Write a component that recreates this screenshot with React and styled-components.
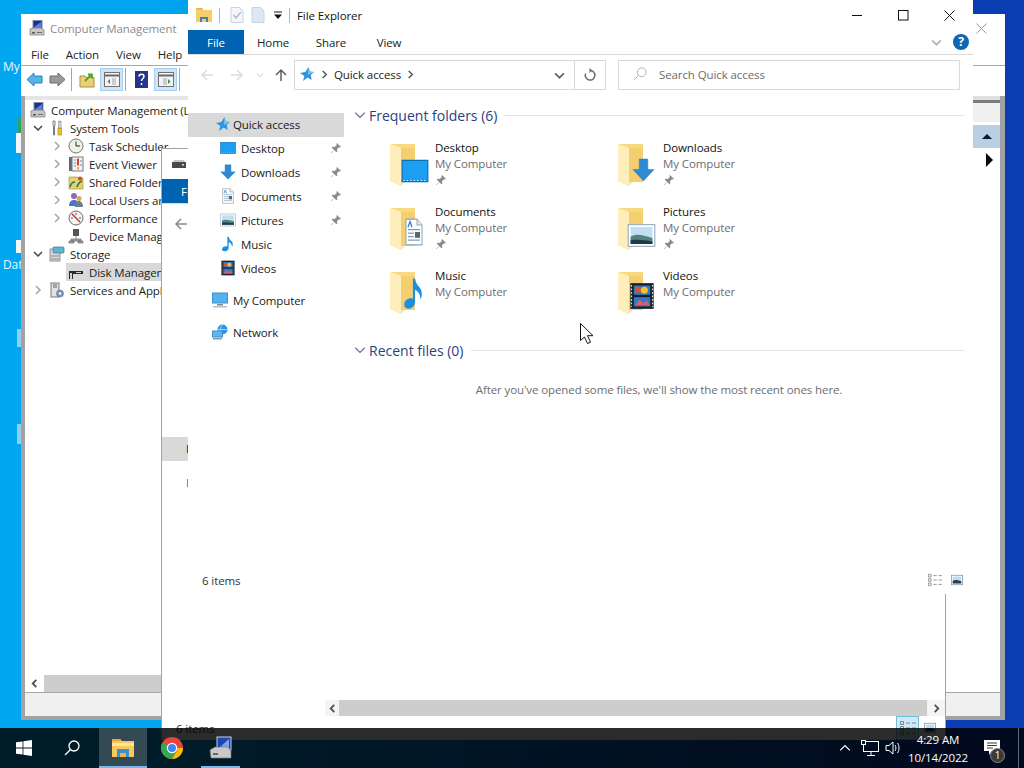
import React from "react";
import styled, { createGlobalStyle } from "styled-components";

const Global = createGlobalStyle`
  html, body { margin: 0; padding: 0; }
  body { font-family: "Open Sans", "Noto Sans", "Liberation Sans", sans-serif; font-size: 11.5px; letter-spacing: -0.1px; color: #1a1a1a; }
`;

const Desktop = styled.div`
  position: relative;
  width: 1024px;
  height: 768px;
  overflow: hidden;
  background: linear-gradient(90deg, #00a6f0 0, #00a4ef 16%, #0a3cb2 92%, #0a3cb2 100%);
`;

const DesktopIcon = styled.div`
  position: absolute;
  left: ${(p) => p.$x}px;
  top: ${(p) => p.$y}px;
  color: #e9f7ff;
  font-size: 12px;
  white-space: nowrap;
`;
const IconStub = styled.div`
  position: absolute;
  left: ${(p) => p.$x}px;
  top: ${(p) => p.$y}px;
  width: ${(p) => p.$w}px;
  height: ${(p) => p.$h}px;
  background: ${(p) => p.$c};
`;

const Window = styled.div`
  position: absolute;
  left: ${(p) => p.$x}px;
  top: ${(p) => p.$y}px;
  width: ${(p) => p.$w}px;
  height: ${(p) => p.$h}px;
  z-index: ${(p) => p.$z};
  background: #fff;
  display: flex;
  flex-direction: column;
  box-sizing: border-box;
  overflow: hidden;
`;
const BackWindow = styled(Window)`
  border: 1px solid #a3a3a3;
  border-bottom: none;
`;

/* Computer Management */
const CmTitle = styled.div`
  height: 26px;
  display: flex;
  align-items: center;
  padding: 2px 18px 0 8px;
  box-sizing: border-box;
  color: #8b8b8b;
  gap: 5px;
  flex: none;
`;
const PushRight = styled.div`
  margin-left: auto;
  display: flex;
  align-items: center;
`;
const CmMenu = styled.div`
  height: 26px;
  display: flex;
  align-items: center;
  padding: 3px 0 0 10px;
  gap: 17px;
  border-bottom: 1px solid #a8a8a8;
  box-sizing: border-box;
  flex: none;
  color: #222;
`;
const CmToolbar = styled.div`
  height: 30px;
  display: flex;
  align-items: flex-start;
  padding: 2px 0 0 2px;
  box-sizing: border-box;
  flex: none;
`;
const ToolBtn = styled.div`
  width: ${(p) => p.$w || 23}px;
  height: 23px;
  box-sizing: border-box;
  display: flex;
  align-items: center;
  justify-content: center;
  background: ${(p) => (p.$on ? "#cfe5f7" : "transparent")};
  border: 1px solid ${(p) => (p.$on ? "#a9cfee" : "transparent")};
`;
const ToolSep = styled.div`
  width: 1px;
  height: 23px;
  margin: 0 2px;
  background: #a5a5a5;
`;
const CmBody = styled.div`
  flex: 1;
  min-height: 0;
  display: flex;
  flex-direction: column;
  background: #a2a2a2;
  padding: 0 5px 4px 4px;
`;
const CmPanes = styled.div`
  flex: 1;
  min-height: 0;
  display: flex;
  border-bottom: 1px solid #a8a8a8;
`;
const TreePane = styled.div`
  width: 163px;
  flex: none;
  overflow: hidden;
  display: flex;
  flex-direction: column;
  background: #fff;
  border-top: 4px solid #e6e6e6;
  padding-top: 1px;
`;
const ResultPane = styled.div`
  flex: 1;
  background: #fff;
  border-top: 4px solid #e6e6e6;
`;
const TreeList = styled.div`
  flex: 1;
  overflow: hidden;
`;
const TreeRow = styled.div`
  height: 18px;
  display: flex;
  align-items: center;
  padding-left: ${(p) => (p.$level === 0 ? 5 : 6 + (p.$level - 1) * 19)}px;
  white-space: nowrap;
`;
const TreeArrow = styled.span`
  width: 18px;
  height: 18px;
  flex: none;
  display: flex;
  align-items: center;
  padding-left: 2px;
  box-sizing: border-box;
`;
const TreeNode = styled.span`
  display: flex;
  align-items: center;
  gap: 5px;
  height: 18px;
  padding-right: 8px;
  margin-left: -2px;
  padding-left: 2px;
  background: ${(p) => (p.$selected ? "#d9d9d9" : "transparent")};
  color: #1c1c1c;
`;
const HScroll = styled.div`
  height: 17px;
  flex: none;
  display: flex;
  align-items: center;
  background: #fff;
`;
const ScrollEnd = styled.div`
  width: ${(p) => p.$w}px;
  height: 100%;
  display: flex;
  align-items: center;
  justify-content: center;
  flex: none;
  background: ${(p) => p.$bg || "transparent"};
`;
const ScrollThumb = styled.div`
  flex: 1;
  height: 100%;
  background: #cdcdcd;
`;
const ActionPane = styled.div`
  width: 54px;
  flex: none;
  background: #fff;
  border-top: 4px solid #e0e0e0;
  display: flex;
  flex-direction: column;
`;
const ActionHead = styled.div`
  height: 19px;
  background: #f0f0f0;
  border-top: 3px solid #7d7d7d;
`;
const ActionRow = styled.div`
  height: ${(p) => p.$h}px;
  margin-top: ${(p) => p.$m}px;
  background: ${(p) => p.$bg || "transparent"};
  display: flex;
  align-items: center;
  justify-content: flex-end;
  padding-right: ${(p) => p.$pr}px;
`;
const CmStatus = styled.div`
  height: 23px;
  flex: none;
  background: #f0f0f0;
`;

/* Explorer */
const ExTitle = styled.div`
  height: 30px;
  flex: none;
  display: flex;
  align-items: center;
  padding-left: ${(p) => p.$pl || 8}px;
  color: #111;
`;
const QuatSep = styled.div`
  width: 1px;
  height: 15px;
  background: #b5b5b5;
  margin: 0 ${(p) => p.$r}px 0 ${(p) => p.$l}px;
`;
const QuatBtn = styled.div`
  width: ${(p) => p.$w}px;
  display: flex;
  justify-content: center;
  align-items: center;
`;
const WinControls = styled.div`
  margin-left: auto;
  display: flex;
  margin-right: 1px;
  align-items: center;
`;
const WinControl = styled.div`
  width: 46px;
  height: 30px;
  display: flex;
  align-items: center;
  justify-content: center;
`;
const RibbonTabs = styled.div`
  height: 25px;
  flex: none;
  display: flex;
  align-items: stretch;
  border-bottom: 1px solid #dadada;
  box-sizing: border-box;
`;
const FileTab = styled.div`
  width: 56px;
  background: #0063b1;
  color: #fff;
  display: flex;
  align-items: center;
  justify-content: center;
`;
const RibbonTab = styled.div`
  width: 58px;
  display: flex;
  align-items: center;
  justify-content: center;
  color: #222;
`;
const RibbonEnd = styled.div`
  margin-left: auto;
  display: flex;
  align-items: center;
  gap: 11px;
  padding-right: 4px;
`;
const HelpBadge = styled.span`
  width: 16px;
  height: 16px;
  border-radius: 50%;
  background: #0f67b1;
  color: #fff;
  font-size: 12px;
  font-weight: 700;
  display: flex;
  align-items: center;
  justify-content: center;
  line-height: 1;
`;
const NavRow = styled.div`
  height: 42px;
  flex: none;
  display: flex;
  align-items: flex-start;
  padding: 5px 13px 0 4px;
  box-sizing: border-box;
`;
const NavBtn = styled.div`
  width: ${(p) => p.$w}px;
  height: 29px;
  display: flex;
  align-items: center;
  justify-content: center;
`;
const AddressBar = styled.div`
  flex: none;
  width: 312px;
  height: 30px;
  box-sizing: border-box;
  border: 1px solid #d9d9d9;
  display: flex;
  align-items: center;
`;
const AddressCrumbs = styled.div`
  flex: 1;
  display: flex;
  align-items: center;
  gap: 5px;
  padding: 0 0 2px 4px;
  color: #222;
`;
const AddressBtn = styled.div`
  width: ${(p) => p.$w}px;
  height: 100%;
  display: flex;
  align-items: center;
  justify-content: center;
  border-left: ${(p) => (p.$line ? "1px solid #d9d9d9" : "none")};
`;
const SearchBox = styled.div`
  flex: 1;
  margin-left: 12px;
  height: 30px;
  box-sizing: border-box;
  border: 1px solid #d9d9d9;
  display: flex;
  align-items: center;
  padding: 0 0 2px 14px;
  gap: 12px;
  color: #6d6d6d;
`;
const ExBody = styled.div`
  flex: 1;
  min-height: 0;
  display: flex;
`;
const Sidebar = styled.div`
  width: ${(p) => p.$w}px;
  flex: none;
  padding-top: ${(p) => p.$top}px;
  box-sizing: border-box;
  overflow: hidden;
`;
const SideRow = styled.div`
  height: 24px;
  box-sizing: border-box;
  display: flex;
  align-items: center;
  gap: ${(p) => p.$iconGap || 5}px;
  padding: 0 0 2px ${(p) => p.$pl}px;
  margin-top: ${(p) => p.$gap || 0}px;
  background: ${(p) => (p.$selected ? "#d9d9d9" : "transparent")};
  color: ${(p) => p.$tint || "#1a1a1a"};
  white-space: nowrap;
`;
const SidePin = styled.span`
  margin-left: auto;
  margin-right: 2px;
  display: flex;
`;
const MainPane = styled.div`
  flex: 1;
  min-width: 0;
  padding: 8px 9px 0 10px;
  box-sizing: border-box;
`;
const GroupHead = styled.div`
  height: 20px;
  display: flex;
  align-items: center;
  color: #2b3f7f;
  font-size: 14px;
  letter-spacing: 0;
  margin-top: ${(p) => p.$m || 0}px;
`;
const GroupChevron = styled.span`
  width: 15px;
  flex: none;
  display: flex;
`;
const GroupLine = styled.div`
  flex: 1;
  height: 1px;
  background: #e4e4e4;
  margin-left: 7px;
`;
const FolderGrid = styled.div`
  display: grid;
  grid-template-columns: 228px 228px;
  grid-auto-rows: 64px;
  margin: 6px 0 0 34px;
`;
const FolderTile = styled.div`
  display: flex;
  padding-top: 9px;
  box-sizing: border-box;
`;
const FolderThumb = styled.div`
  width: 47px;
  height: 48px;
  flex: none;
`;
const FolderText = styled.div`
  display: flex;
  flex-direction: column;
`;
const FolderName = styled.div`
  height: 16px;
  line-height: 16px;
  color: #111;
`;
const FolderSub = styled.div`
  height: 16px;
  line-height: 16px;
  color: #6d6d6d;
`;
const FolderPin = styled.div`
  height: 16px;
  display: flex;
  align-items: center;
`;
const EmptyNote = styled.div`
  margin-top: 22px;
  line-height: 16px;
  text-align: center;
  color: #6d6d6d;
`;
const StatusBar = styled.div`
  height: ${(p) => p.$h}px;
  box-sizing: border-box;
  flex: none;
  display: flex;
  align-items: center;
  padding: 0 ${(p) => p.$pr}px ${(p) => p.$pb || 0}px 14px;
  color: #333;
`;
const ViewBtns = styled.div`
  margin-left: auto;
  display: flex;
  align-items: center;
  gap: ${(p) => p.$gap}px;
`;
const ViewBtn = styled.div`
  height: ${(p) => p.$h || 16}px;
  width: ${(p) => p.$w}px;
  display: flex;
  align-items: center;
  justify-content: center;
  box-sizing: border-box;
  background: ${(p) => (p.$on ? "#cfeaf6" : "transparent")};
  border: 1px solid ${(p) => (p.$on ? "#72bcd8" : "transparent")};
`;
const BackScroll = styled.div`
  height: 16px;
  flex: none;
  margin-left: 163px;
  display: flex;
`;
const BackSpacer = styled.div`
  flex: 1;
  min-height: 0;
  display: flex;
`;
const MousePointer = styled.svg`
  position: absolute;
  left: 580px;
  top: 323px;
  z-index: 5;
`;

/* Taskbar */
const Taskbar = styled.div`
  position: absolute;
  left: 0;
  right: 0;
  bottom: 0;
  height: 40px;
  z-index: 9;
  background: rgba(0, 0, 0, 0.83);
  display: flex;
  color: #fff;
`;
const TaskBtn = styled.div`
  position: relative;
  width: ${(p) => p.$w}px;
  margin-left: ${(p) => p.$m || 0}px;
  display: flex;
  align-items: center;
  justify-content: center;
  background: ${(p) => (p.$active ? "rgba(255,255,255,0.2)" : "transparent")};
  ${(p) =>
    p.$bar !== undefined
      ? `&::after { content: ""; position: absolute; bottom: 0; height: 2px; background: #76b9ed; left: ${p.$bar}px; right: ${p.$bar}px; }`
      : ""}
`;
const Tray = styled.div`
  margin-left: auto;
  display: flex;
  align-items: stretch;
`;
const TrayBtn = styled.div`
  width: ${(p) => p.$w}px;
  display: flex;
  align-items: center;
  justify-content: center;
`;
const Clock = styled.div`
  width: 70px;
  display: flex;
  flex-direction: column;
  align-items: center;
  justify-content: center;
  line-height: 18px;
  padding-top: 2px;
  box-sizing: border-box;
`;
const NotifyWrap = styled.div`
  position: relative;
  width: 38px;
  display: flex;
  align-items: center;
  justify-content: center;
`;
const NotifyBadge = styled.span`
  position: absolute;
  left: 17px;
  top: 20px;
  width: 15px;
  height: 15px;
  border-radius: 50%;
  background: #3a3a3a;
  border: 1px solid #8a8a8a;
  box-sizing: border-box;
  font-size: 10px;
  line-height: 13px;
  text-align: center;
  color: #fff;
`;
const ShowDesktop = styled.div`
  width: 5px;
  margin-left: 7px;
  border-left: 1px solid #5a6670;
`;

/* ---- drawings ---- */
const Chevron = ({ dir = "right", c = "#8f8f8f", s = 10, w = 1.6 }) => {
  const d = {
    right: "M3 1l4 4-4 4",
    left: "M7 1L3 5l4 4",
    down: "M1 3l4 4 4-4",
    up: "M1 7l4-4 4 4",
  }[dir];
  return (
    <svg width={s} height={s} viewBox="0 0 10 10">
      <path d={d} fill="none" stroke={c} strokeWidth={w} />
    </svg>
  );
};
const ScrollArrow = ({ dir }) => <Chevron dir={dir} c="#505050" w={2} s={9} />;
const Tri = ({ dir }) => (
  <svg width="10" height="14" viewBox="0 0 10 14">
    {dir === "up" ? <path d="M0 9l5-5 5 5z" fill="#0c1a2a" /> : <path d="M2 0l7 7-7 7z" fill="#0a0a0a" />}
  </svg>
);
const Pin = ({ s = 12, c = "#8a8a8a" }) => (
  <svg width={s} height={s} viewBox="0 0 12 12">
    <path d="M7 1l4 4-1 .6-1-.4-2 2 .3 2.3-.8.8L4 8 1.5 11 1 10.5 4 8 1.7 5.6l.8-.8 2.3.3 2-2-.4-1z" fill={c} />
  </svg>
);
const GDesktop = () => (
  <>
    <rect x="1" y="3.5" width="22" height="17" fill="#1c9ef2" stroke="#0b6fb5" />
    <path d="M2 19.6h20" stroke="#fff" strokeWidth=".8" strokeDasharray="1 2" />
  </>
);
const GDownloads = () => <path d="M7.5 1h9v10.5H23L12 23 1 11.5h6.5z" fill="#2f8ad6" stroke="#2a7dc4" strokeWidth=".5" />;
const GDocuments = () => (
  <>
    <path d="M4 1h11l5 5v17H4z" fill="#fff" stroke="#8fa6b8" />
    <path d="M15 1v5h5" fill="#e6eef4" stroke="#8fa6b8" />
    <path d="M6 8l2-5 2 5" fill="none" stroke="#2a7dd0" strokeWidth="1.2" />
    <path d="M6 10h12M6 13h6M6 16h6M6 19h12" stroke="#7ea0bc" />
    <rect x="13" y="12" width="5" height="5" fill="#4d6a78" />
  </>
);
const GPictures = () => (
  <>
    <rect x="1" y="3" width="22" height="18" fill="#fff" stroke="#9fb2c0" />
    <rect x="3" y="5" width="18" height="14" fill="#bfe0f2" />
    <path d="M3 13c5-3 10-1 18 1v5H3z" fill="#55807f" />
    <path d="M3 16c6-1 12 0 18 1v2H3z" fill="#1d3c48" />
  </>
);
const GMusic = () => (
  <path d="M11 1h2c.5 3 2 4.500 4 6.500 2.500 2.500 3 5.500 1 9-.2-3-1-5.500-5-7V18c0 3-3 5-6 5-2.500 0-4-1.300-4-3 0-2.500 3-4.500 6-4.500.8 0 1.400.1 2 .4z" fill="#1e8fe0" />
);
const GVideos = () => (
  <>
    <rect x="2" y="1" width="20" height="22" fill="#15202c" />
    <rect x="5" y="3" width="14" height="8" fill="#3178c6" />
    <rect x="5" y="13" width="14" height="8" fill="#3178c6" />
    <rect x="6" y="4" width="5" height="5" fill="#d8522f" />
    <circle cx="14" cy="7" r="3" fill="#f0c431" />
    <path d="M6 20l4-5 3 3 3-2 3 4z" fill="#e05a6a" />
    <path d="M3 2.500v19M21 2.500v19" stroke="#d8d8d8" strokeDasharray="1.500 1.500" />
  </>
);
const glyphs = { desktop: GDesktop, downloads: GDownloads, documents: GDocuments, pictures: GPictures, music: GMusic, videos: GVideos };
const SmallGlyph = ({ name }) => {
  const G = glyphs[name];
  return (
    <svg width="16" height="16" viewBox="0 0 24 24">
      <G />
    </svg>
  );
};
const overlayPos = {
  desktop: [13, 16, 28, 30],
  downloads: [16, 18, 23, 24],
  documents: [14, 14, 24, 28],
  pictures: [11, 17, 29, 29],
  music: [13, 9, 26, 33],
  videos: [12, 14, 28, 28],
};
const BigFolder = ({ name }) => {
  const G = glyphs[name];
  const [x, y, w, h] = overlayPos[name];
  return (
    <svg width="47" height="48" viewBox="0 0 47 48">
      <path d="M2 4h25v38H13v4L2 41z" fill="#fad880" />
      <path d="M13 8h14v34H13z" fill="#f4cf6f" />
      <path d="M2 4l11 4v38L2 41z" fill="#fdeebc" />
      <path d="M13 46l4-4h-4z" fill="#efe6c6" />
      <svg x={x} y={y} width={w} height={h} viewBox="0 0 24 24" preserveAspectRatio="none">
        <G />
      </svg>
    </svg>
  );
};
const Star = () => (
  <svg width="16" height="16" viewBox="0 0 16 16">
    <path d="M9.500 1l1.300 4.400L15 6l-3.200 3 .9 5-4-2.400L4 15l1.300-5L1 7l5.300-1z" fill="#2f95dc" />
    <path d="M9.500 1l1.300 4.400L15 6l-6 3z" fill="#7cc4ee" />
  </svg>
);
const Monitor = () => (
  <svg width="16" height="16" viewBox="0 0 16 16">
    <rect x="0.500" y="1" width="15" height="10" fill="#55b2ee" stroke="#3f8fc8" />
    <rect x="5" y="12" width="6" height="1.500" fill="#7d8c96" />
    <rect x="1" y="14" width="14" height="1.500" fill="#b5c0c8" />
  </svg>
);
const NetworkIcon = () => (
  <svg width="16" height="16" viewBox="0 0 16 16">
    <circle cx="10.500" cy="5.500" r="5" fill="#2f95dc" />
    <path d="M6 5.500h9M10.500 1c-3 3-3 6 0 9" stroke="#bfe4f8" fill="none" strokeWidth=".8" />
    <rect x="0.500" y="7" width="10" height="6" fill="#5db6ee" stroke="#3f8fc8" />
    <rect x="1" y="14" width="9" height="1.500" fill="#8b9aa5" />
  </svg>
);
const Drive = ({ c = "#4a4a4a" }) => (
  <svg width="16" height="16" viewBox="0 0 16 16">
    <path d="M2 6l1-2h10l1 2z" fill="#c8c8c8" />
    <rect x="1" y="6" width="14" height="6" fill={c} />
    <rect x="11" y="8" width="2" height="1.500" fill="#ddd" />
  </svg>
);
const CmIcon = ({ s = 16 }) => (
  <svg width={s} height={s} viewBox="0 0 16 16">
    <rect x="4" y="0.500" width="9" height="8" fill="#1c2f86" stroke="#7f8eb0" />
    <path d="M5 7l7-5v6H5z" fill="#5b7fd6" />
    <path d="M1 9l3-1h9l2 2v5H1z" fill="#c7c7c7" stroke="#787878" strokeWidth=".7" />
    <rect x="3" y="12" width="3" height="1.500" fill="#555" />
    <rect x="8" y="12" width="5" height="1" fill="#6f6f6f" />
  </svg>
);
const Tools = () => (
  <svg width="16" height="16" viewBox="0 0 16 16">
    <path d="M4 1h2v4l-.500 1v9h-1V6L4 5z" fill="none" stroke="#6d6d6d" strokeWidth=".9" />
    <rect x="9" y="8" width="3.500" height="7" fill="#f2c230" stroke="#a27c10" strokeWidth=".6" />
    <path d="M9.500 8V1h1v1h1V1h.6v7z" fill="#d9d9d9" stroke="#777" strokeWidth=".5" />
  </svg>
);
const Clock16 = () => (
  <svg width="16" height="16" viewBox="0 0 16 16">
    <circle cx="8" cy="8" r="7" fill="#eef1e6" stroke="#6e7a70" />
    <path d="M8 3.500V8h4" fill="none" stroke="#2b2b2b" />
  </svg>
);
const EventIcon = () => (
  <svg width="16" height="16" viewBox="0 0 16 16">
    <rect x="1" y="1" width="4" height="14" fill="#5a6a7a" />
    <rect x="4" y="1" width="11" height="14" fill="#f2f2f2" stroke="#7a7a7a" />
    <rect x="9" y="2.500" width="2" height="7" fill="#d83a3a" />
    <rect x="9" y="11" width="2" height="2.500" fill="#e0b020" />
    <path d="M6 4h2M6 7h2M6 10h2M12 5h2M12 9h2" stroke="#6b8fb0" />
  </svg>
);
const SharedIcon = () => (
  <svg width="16" height="16" viewBox="0 0 16 16">
    <path d="M1 3h9l1 1h4v11H1z" fill="#e8cf70" stroke="#a08a2a" strokeWidth=".6" />
    <path d="M2 13c1-4 3-5 5-5M9 13c1-3 2-5 5-6" stroke="#2a7a4a" fill="none" strokeWidth="1.500" />
    <circle cx="12" cy="4.500" r="2" fill="#c74a2a" />
  </svg>
);
const UsersIcon = () => (
  <svg width="16" height="16" viewBox="0 0 16 16">
    <circle cx="6" cy="4" r="3" fill="#8f6ab8" />
    <path d="M1 14c0-5 3-6 5-6s5 1 5 6z" fill="#4a74c4" />
    <circle cx="11" cy="6.500" r="2.500" fill="#d8a860" />
    <path d="M7 15c0-4 2-6 4-6s4 2 4 6z" fill="#6f7e8c" />
  </svg>
);
const PerfIcon = () => (
  <svg width="16" height="16" viewBox="0 0 16 16">
    <circle cx="8" cy="8" r="7" fill="#f4f4f4" stroke="#6c6c6c" />
    <path d="M4 4l8 8" stroke="#c43030" strokeWidth="1.500" />
    <path d="M3 8h2M11 8h2M8 3v2" stroke="#555" />
  </svg>
);
const DeviceIcon = () => (
  <svg width="16" height="16" viewBox="0 0 16 16">
    <rect x="5" y="1" width="6" height="7" fill="#555" />
    <path d="M8 8v3M3 11h10v2H3zM1 13h5v2H1zM10 13h5v2h-5z" stroke="#666" fill="#aaa" strokeWidth=".7" />
  </svg>
);
const StorageIcon = () => (
  <svg width="16" height="16" viewBox="0 0 16 16">
    <rect x="1" y="3" width="10" height="12" fill="#d9d9d9" stroke="#7c7c7c" strokeWidth=".8" />
    <rect x="4" y="1" width="11" height="6" rx="1" fill="#5fb4d4" stroke="#4c7d92" strokeWidth=".8" />
    <path d="M2 10h8M2 13h8" stroke="#8b8b8b" />
  </svg>
);
const DiskIcon = () => (
  <svg width="16" height="16" viewBox="0 0 16 16">
    <path d="M1 7h14v3H5v5H1z" fill="#2a2a2a" />
    <path d="M2 15V9h2v6zM8 8h5v1H8z" fill="#d0d0d0" />
  </svg>
);
const ServicesIcon = () => (
  <svg width="16" height="16" viewBox="0 0 16 16">
    <rect x="2" y="1" width="8" height="14" fill="#e2e2e2" stroke="#7a7a7a" />
    <path d="M4 3h4M4 5h4" stroke="#666" />
    <circle cx="11" cy="11.500" r="3.500" fill="#7a9cb4" stroke="#557" strokeWidth=".5" />
    <circle cx="11" cy="11.500" r="1.200" fill="#fff" />
  </svg>
);
const QuatFolder = () => (
  <svg width="16" height="16" viewBox="0 0 16 16">
    <path d="M0 1h6l1.500 2H16v12H0z" fill="#f4cf6c" />
    <path d="M0 1h6l1 1.500H0z" fill="#e7b44a" />
    <path d="M4 15v-5h8v5h-2v-3H6v3z" fill="#4a7ea8" />
  </svg>
);
const QuatDoc = ({ check }) => (
  <svg width="14" height="16" viewBox="0 0 14 16">
    <path d="M1 0.500h8.500L13 4v11.500H1z" fill={check ? "#f3f6fa" : "#dfe8f2"} stroke="#c8d2de" />
    {check && <path d="M3.500 8l2.500 3 5-6" fill="none" stroke="#a8b4c2" strokeWidth="1.200" />}
  </svg>
);
const QuatDrop = () => (
  <svg width="10" height="10" viewBox="0 0 10 10">
    <path d="M1 2h8" stroke="#111" strokeWidth="1" />
    <path d="M1 4.500h8L5 9z" fill="#111" />
  </svg>
);
const NavArrow = ({ dir, c }) => {
  const d = {
    left: "M14 8H3M8 3L3 8l5 5",
    right: "M2 8h11M8 3l5 5-5 5",
    up: "M8 14V3M3 8l5-5 5 5",
  }[dir];
  return (
    <svg width="16" height="16" viewBox="0 0 16 16">
      <path d={d} fill="none" stroke={c} strokeWidth="1.500" />
    </svg>
  );
};
const ToolArrow = ({ blue }) => (
  <svg width="17" height="15" viewBox="0 0 17 15">
    {blue ? (
      <path d="M8 1v3h8v7H8v3L1 7.500z" fill="#55b4e6" stroke="#2a83b8" />
    ) : (
      <path d="M9 1v3H1v7h8v3l7-6.500z" fill="#9a9a9a" stroke="#6c6c6c" />
    )}
  </svg>
);
const PaneIcon = ({ right }) => (
  <svg width="16" height="15" viewBox="0 0 16 15">
    <rect x="0.500" y="0.500" width="15" height="14" fill="#f4f4f4" stroke="#727272" />
    <path d="M1 3.500h14" stroke="#6a6a6a" strokeWidth="2" />
    <path d={right ? "M6 6v7M8 6v7" : "M9 6v7M11 6v7"} stroke="#9aa5ad" />
    <path d={right ? "M10 7v5l2.500-2.500z" : "M6 7v5L3.500 9.500z"} fill="#4a8a5a" />
  </svg>
);
const UpFolder = () => (
  <svg width="16" height="16" viewBox="0 0 16 16">
    <path d="M1 4h5l1 1.500h8V15H1z" fill="#ecd078" stroke="#a7903c" />
    <path d="M6 9l6-6M9 2.500h4v4" stroke="#4fa52c" strokeWidth="1.800" fill="none" />
  </svg>
);
const HelpBook = () => (
  <svg width="13" height="17" viewBox="0 0 13 17">
    <rect width="13" height="17" fill="#25358e" />
    <path d="M4 5.500c0-3 5-3 5 0 0 2-2.500 2-2.500 4.500M6.500 12v2" stroke="#fff" fill="none" strokeWidth="1.500" />
  </svg>
);
const ListViewIcon = ({ c = "#8d8d8d" }) => (
  <svg width="16" height="14" viewBox="0 0 16 14">
    <path d="M.5.500h3v3h-3zM.5 5.500h3v3h-3zM.5 10.500h3v3h-3z" fill="none" stroke={c} />
    <path d="M6 2h4M12 2h4M6 7h4M12 7h4M6 12h4M12 12h4" stroke={c} />
  </svg>
);
const ThumbViewIcon = () => (
  <svg width="14" height="12" viewBox="0 0 14 12">
    <rect x=".5" y=".5" width="13" height="11" fill="#fff" stroke="#8fa0ad" />
    <rect x="2" y="2" width="10" height="8" fill="#bcdcef" />
    <path d="M2 7c3-2 6-1 10 .5V10H2z" fill="#24414f" />
  </svg>
);

const WinLogo = () => (
  <svg width="16" height="16" viewBox="0 0 16 16">
    <path d="M0 2.300l6.600-.9v6.200H0zM7.400 1.300L16 0v7.600H7.400zM0 8.400h6.600v6.200L0 13.700zM7.400 8.400H16V16l-8.600-1.300z" fill="#fff" />
  </svg>
);
const SearchGlass = ({ c = "#fff", s = 16, w = 1.300 }) => (
  <svg width={s} height={s} viewBox="0 0 16 16">
    <circle cx="10" cy="6" r="5" fill="none" stroke={c} strokeWidth={w} />
    <path d="M6.300 9.700L1 15" stroke={c} strokeWidth={w} />
  </svg>
);
const TaskExplorer = () => (
  <svg width="22" height="18" viewBox="0 0 22 18">
    <path d="M0 0h8l2 2h12v16H0z" fill="#f6c95a" />
    <path d="M0 0h8l1.500 2H0z" fill="#e2a83a" />
    <path d="M0 4h22v3H0z" fill="#fbe39a" />
    <path d="M5 18V10h12v8h-3v-4H8v4z" fill="#3d8fd0" />
    <rect x="8" y="14" width="6" height="4" fill="#f0b83f" />
  </svg>
);
const Chrome = () => (
  <svg width="24" height="24" viewBox="0 0 48 48">
    <circle cx="24" cy="24" r="22" fill="#e8453c" />
    <path d="M24 24L5 35C9 42 16 46 24 46l9.500-11z" fill="#34a853" />
    <path d="M24 24l-9.500 11L5 35C1 28 1 20 5 13l19 11z" fill="#34a853" />
    <path d="M24 24h22c0 12-10 22-22 22l11-19z" fill="#fbbc05" />
    <circle cx="24" cy="24" r="10.500" fill="#fff" />
    <circle cx="24" cy="24" r="8" fill="#4285f4" />
  </svg>
);
const TaskCm = () => (
  <svg width="24" height="24" viewBox="0 0 24 24">
    <rect x="8" y="1" width="14" height="13" fill="#1d47b8" stroke="#c9d2de" />
    <path d="M10 12L20 3v9z" fill="#7fa3e8" />
    <path d="M1 14l5-3h13l3 4v7H2z" fill="#c9c9c9" stroke="#777" strokeWidth=".7" />
    <rect x="4" y="17" width="5" height="2" fill="#666" />
  </svg>
);
const NetTray = () => (
  <svg width="18" height="16" viewBox="0 0 18 16">
    <rect x="2.500" y="1.500" width="15" height="10" fill="none" stroke="#fff" />
    <rect x=".5" y=".5" width="4" height="4" fill="#001c29" stroke="#fff" />
    <path d="M10 12v3M6 15.500h8" stroke="#fff" />
  </svg>
);
const Volume = () => (
  <svg width="16" height="16" viewBox="0 0 16 16">
    <path d="M1 5.500h3L8 2v12l-4-3.500H1z" fill="none" stroke="#fff" />
    <path d="M10 5c1.200 1.800 1.200 4.200 0 6M12.500 3c2 3 2 7 0 10" fill="none" stroke="#fff" />
  </svg>
);
const NotifyGlyph = () => (
  <svg width="18" height="18" viewBox="0 0 18 18">
    <path d="M1 1h16v11H9l-3 4v-4H1z" fill="#fff" />
    <path d="M4 4h10M4 6.500h10M4 9h6" stroke="#3a3a3a" />
  </svg>
);

const treeItems = [
  { level: 1, arrow: "down", Icon: Tools, label: "System Tools" },
  { level: 2, arrow: "right", Icon: Clock16, label: "Task Scheduler" },
  { level: 2, arrow: "right", Icon: EventIcon, label: "Event Viewer" },
  { level: 2, arrow: "right", Icon: SharedIcon, label: "Shared Folders" },
  { level: 2, arrow: "right", Icon: UsersIcon, label: "Local Users and Groups" },
  { level: 2, arrow: "right", Icon: PerfIcon, label: "Performance" },
  { level: 2, Icon: DeviceIcon, label: "Device Manager" },
  { level: 1, arrow: "down", Icon: StorageIcon, label: "Storage" },
  { level: 2, Icon: DiskIcon, label: "Disk Management", selected: true },
  { level: 1, arrow: "right", Icon: ServicesIcon, label: "Services and Applications" },
];

const quick = [
  ["desktop", "Desktop", true],
  ["downloads", "Downloads", true],
  ["documents", "Documents", true],
  ["pictures", "Pictures", true],
  ["music", "Music", false],
  ["videos", "Videos", false],
];

export default function App() {
  return (
    <Desktop>
      <Global />
      <DesktopIcon $x={3} $y={58}>My</DesktopIcon>
      <IconStub $x={18} $y={118} $w={3} $h={15} $c="#2fa35a" />
      <IconStub $x={16} $y={133} $w={5} $h={20} $c="#f2f6fa" />
      <IconStub $x={16} $y={240} $w={5} $h={13} $c="#f2f6fa" />
      <DesktopIcon $x={3} $y={256}>Dat</DesktopIcon>
      <IconStub $x={17} $y={329} $w={4} $h={18} $c="#8fd0f0" />
      <IconStub $x={17} $y={424} $w={4} $h={20} $c="#8fd0f0" />

      <Window $x={21} $y={14} $w={984} $h={706} $z={1}>
        <CmTitle>
          <CmIcon />
          Computer Management
          <PushRight>
            <svg width="11" height="11" viewBox="0 0 11 11">
              <path d="M.5.500l10 10M10.500.500l-10 10" stroke="#9a9a9a" />
            </svg>
          </PushRight>
        </CmTitle>
        <CmMenu>
          <span>File</span>
          <span>Action</span>
          <span>View</span>
          <span>Help</span>
        </CmMenu>
        <CmToolbar>
          <ToolBtn>
            <ToolArrow blue />
          </ToolBtn>
          <ToolBtn>
            <ToolArrow />
          </ToolBtn>
          <ToolSep />
          <ToolBtn $w={26}>
            <UpFolder />
          </ToolBtn>
          <ToolBtn $on>
            <PaneIcon />
          </ToolBtn>
          <ToolSep />
          <ToolBtn $w={26}>
            <HelpBook />
          </ToolBtn>
          <ToolBtn $on>
            <PaneIcon right />
          </ToolBtn>
          <ToolSep />
        </CmToolbar>
        <CmBody>
          <CmPanes>
            <TreePane>
              <TreeList>
                <TreeRow $level={0}>
                  <TreeNode>
                    <CmIcon />
                    Computer Management (Local)
                  </TreeNode>
                </TreeRow>
                {treeItems.map((t) => (
                  <TreeRow key={t.label} $level={t.level}>
                    <TreeArrow>
                      {t.arrow && (
                        <Chevron dir={t.arrow} c={t.arrow === "down" ? "#444" : "#a6a6a6"} s={10} w={1.500} />
                      )}
                    </TreeArrow>
                    <TreeNode $selected={t.selected}>
                      <t.Icon />
                      {t.label}
                    </TreeNode>
                  </TreeRow>
                ))}
              </TreeList>
              <HScroll>
                <ScrollEnd $w={19}>
                  <ScrollArrow dir="left" />
                </ScrollEnd>
                <ScrollThumb />
              </HScroll>
            </TreePane>
            <ResultPane />
            <ActionPane>
              <ActionHead />
              <ActionRow $h={23} $m={3} $bg="#b9cfe4" $pr={8}>
                <Tri dir="up" />
              </ActionRow>
              <ActionRow $h={14} $m={5} $pr={6}>
                <Tri dir="right" />
              </ActionRow>
            </ActionPane>
          </CmPanes>
          <CmStatus />
        </CmBody>
      </Window>

      <BackWindow $x={161} $y={148} $w={785} $h={592} $z={2}>
        <ExTitle $pl={9}>
          <Drive />
        </ExTitle>
        <RibbonTabs>
          <FileTab>File</FileTab>
        </RibbonTabs>
        <NavRow>
          <NavBtn $w={30}>
            <NavArrow dir="left" c="#8a8a8a" />
          </NavBtn>
        </NavRow>
        <BackSpacer>
          <Sidebar $w={163} $top={191}>
            <SideRow $selected $pl={24}>Desktop</SideRow>
            <SideRow $pl={24} $tint="#1d6fbf" $gap={10}>Libraries</SideRow>
          </Sidebar>
        </BackSpacer>
        <BackScroll>
          <ScrollEnd $w={14} $bg="#f4f4f4">
            <ScrollArrow dir="left" />
          </ScrollEnd>
          <ScrollThumb />
          <ScrollEnd $w={18} $bg="#f4f4f4">
            <ScrollArrow dir="right" />
          </ScrollEnd>
        </BackScroll>
        <StatusBar $h={24} $pr={8}>
          6 items
          <ViewBtns $gap={4}>
            <ViewBtn $on $w={23} $h={24}>
              <ListViewIcon c="#6f8a96" />
            </ViewBtn>
            <ViewBtn $w={14}>
              <ThumbViewIcon />
            </ViewBtn>
          </ViewBtns>
        </StatusBar>
      </BackWindow>

      <Window $x={188} $y={0} $w={785} $h={594} $z={3}>
        <ExTitle>
          <QuatFolder />
          <QuatSep $l={7} $r={9} />
          <QuatBtn $w={16}>
            <QuatDoc check />
          </QuatBtn>
          <QuatBtn $w={26}>
            <QuatDoc />
          </QuatBtn>
          <QuatBtn $w={14}>
            <QuatDrop />
          </QuatBtn>
          <QuatSep $l={4} $r={7} />
          File Explorer
          <WinControls>
            <WinControl>
              <svg width="11" height="11" viewBox="0 0 11 11">
                <path d="M0 5.500h10" stroke="#111" />
              </svg>
            </WinControl>
            <WinControl>
              <svg width="11" height="11" viewBox="0 0 11 11">
                <rect x=".5" y=".5" width="9.500" height="9.500" fill="none" stroke="#111" />
              </svg>
            </WinControl>
            <WinControl>
              <svg width="11" height="11" viewBox="0 0 11 11">
                <path d="M.5.500l10 10M10.500.500l-10 10" stroke="#111" />
              </svg>
            </WinControl>
          </WinControls>
        </ExTitle>
        <RibbonTabs>
          <FileTab>File</FileTab>
          <RibbonTab>Home</RibbonTab>
          <RibbonTab>Share</RibbonTab>
          <RibbonTab>View</RibbonTab>
          <RibbonEnd>
            <Chevron dir="down" c="#b5b5b5" s={11} />
            <HelpBadge>?</HelpBadge>
          </RibbonEnd>
        </RibbonTabs>
        <NavRow>
          <NavBtn $w={30}>
            <NavArrow dir="left" c="#dcdcdc" />
          </NavBtn>
          <NavBtn $w={30}>
            <NavArrow dir="right" c="#dcdcdc" />
          </NavBtn>
          <NavBtn $w={16}>
            <Chevron dir="down" c="#dcdcdc" s={8} />
          </NavBtn>
          <NavBtn $w={26}>
            <NavArrow dir="up" c="#5f5f5f" />
          </NavBtn>
          <AddressBar>
            <AddressCrumbs>
              <Star />
              <Chevron dir="right" c="#555" s={9} />
              <span>Quick access</span>
              <Chevron dir="right" c="#555" s={9} />
            </AddressCrumbs>
            <AddressBtn $w={30}>
              <Chevron dir="down" c="#666" s={11} />
            </AddressBtn>
            <AddressBtn $w={30} $line>
              <svg width="14" height="14" viewBox="0 0 14 14">
                <path d="M7 2.500a4.800 4.800 0 1 1-4.400 3" fill="none" stroke="#707070" strokeWidth="1.500" />
                <path d="M6.500 0v5l3-2.500z" fill="#707070" />
              </svg>
            </AddressBtn>
          </AddressBar>
          <SearchBox>
            <SearchGlass c="#a8a8a8" s={14} w={1} />
            Search Quick access
          </SearchBox>
        </NavRow>
        <ExBody>
          <Sidebar $w={156} $top={16}>
            <SideRow $selected $pl={27} $iconGap={2}>
              <Star />
              Quick access
            </SideRow>
            {quick.map(([k, label, pinned]) => (
              <SideRow key={k} $pl={32}>
                <SmallGlyph name={k} />
                {label}
                {pinned && (
                  <SidePin>
                    <Pin />
                  </SidePin>
                )}
              </SideRow>
            ))}
            <SideRow $pl={24} $gap={8}>
              <Monitor />
              My Computer
            </SideRow>
            <SideRow $pl={24} $gap={8}>
              <NetworkIcon />
              Network
            </SideRow>
          </Sidebar>
          <MainPane>
            <GroupHead>
              <GroupChevron>
                <Chevron dir="down" c="#5a6a9a" s={12} w={1} />
              </GroupChevron>
              Frequent folders (6)
              <GroupLine />
            </GroupHead>
            <FolderGrid>
              {quick.map(([k, label, pinned]) => (
                <FolderTile key={k}>
                  <FolderThumb>
                    <BigFolder name={k} />
                  </FolderThumb>
                  <FolderText>
                    <FolderName>{label}</FolderName>
                    <FolderSub>My Computer</FolderSub>
                    {pinned && (
                      <FolderPin>
                        <Pin />
                      </FolderPin>
                    )}
                  </FolderText>
                </FolderTile>
              ))}
            </FolderGrid>
            <GroupHead $m={17}>
              <GroupChevron>
                <Chevron dir="down" c="#5a6a9a" s={12} w={1} />
              </GroupChevron>
              Recent files (0)
              <GroupLine />
            </GroupHead>
            <EmptyNote>After you've opened some files, we'll show the most recent ones here.</EmptyNote>
          </MainPane>
        </ExBody>
        <StatusBar $h={26} $pr={9} $pb={2}>
          6 items
          <ViewBtns $gap={7}>
            <ViewBtn $w={16}>
              <ListViewIcon />
            </ViewBtn>
            <ViewBtn $w={14}>
              <ThumbViewIcon />
            </ViewBtn>
          </ViewBtns>
        </StatusBar>
      </Window>

      <MousePointer width="14" height="21" viewBox="0 0 14 21">
        <path d="M.5.500v17l4-3.500 3 6.500 3-1.300-3-6.500h5.500z" fill="#fff" stroke="#111" />
      </MousePointer>

      <Taskbar>
        <TaskBtn $w={48}>
          <WinLogo />
        </TaskBtn>
        <TaskBtn $w={48}>
          <SearchGlass />
        </TaskBtn>
        <TaskBtn $w={48} $m={3} $active $bar={0}>
          <TaskExplorer />
        </TaskBtn>
        <TaskBtn $w={49}>
          <Chrome />
        </TaskBtn>
        <TaskBtn $w={49} $bar={5}>
          <TaskCm />
        </TaskBtn>
        <Tray>
          <TrayBtn $w={24}>
            <Chevron dir="up" c="#fff" s={12} w={1} />
          </TrayBtn>
          <TrayBtn $w={26}>
            <NetTray />
          </TrayBtn>
          <TrayBtn $w={20}>
            <Volume />
          </TrayBtn>
          <Clock>
            <span>4:29 AM</span>
            <span>10/14/2022</span>
          </Clock>
          <NotifyWrap>
            <NotifyGlyph />
            <NotifyBadge>1</NotifyBadge>
          </NotifyWrap>
          <ShowDesktop />
        </Tray>
      </Taskbar>
    </Desktop>
  );
}
